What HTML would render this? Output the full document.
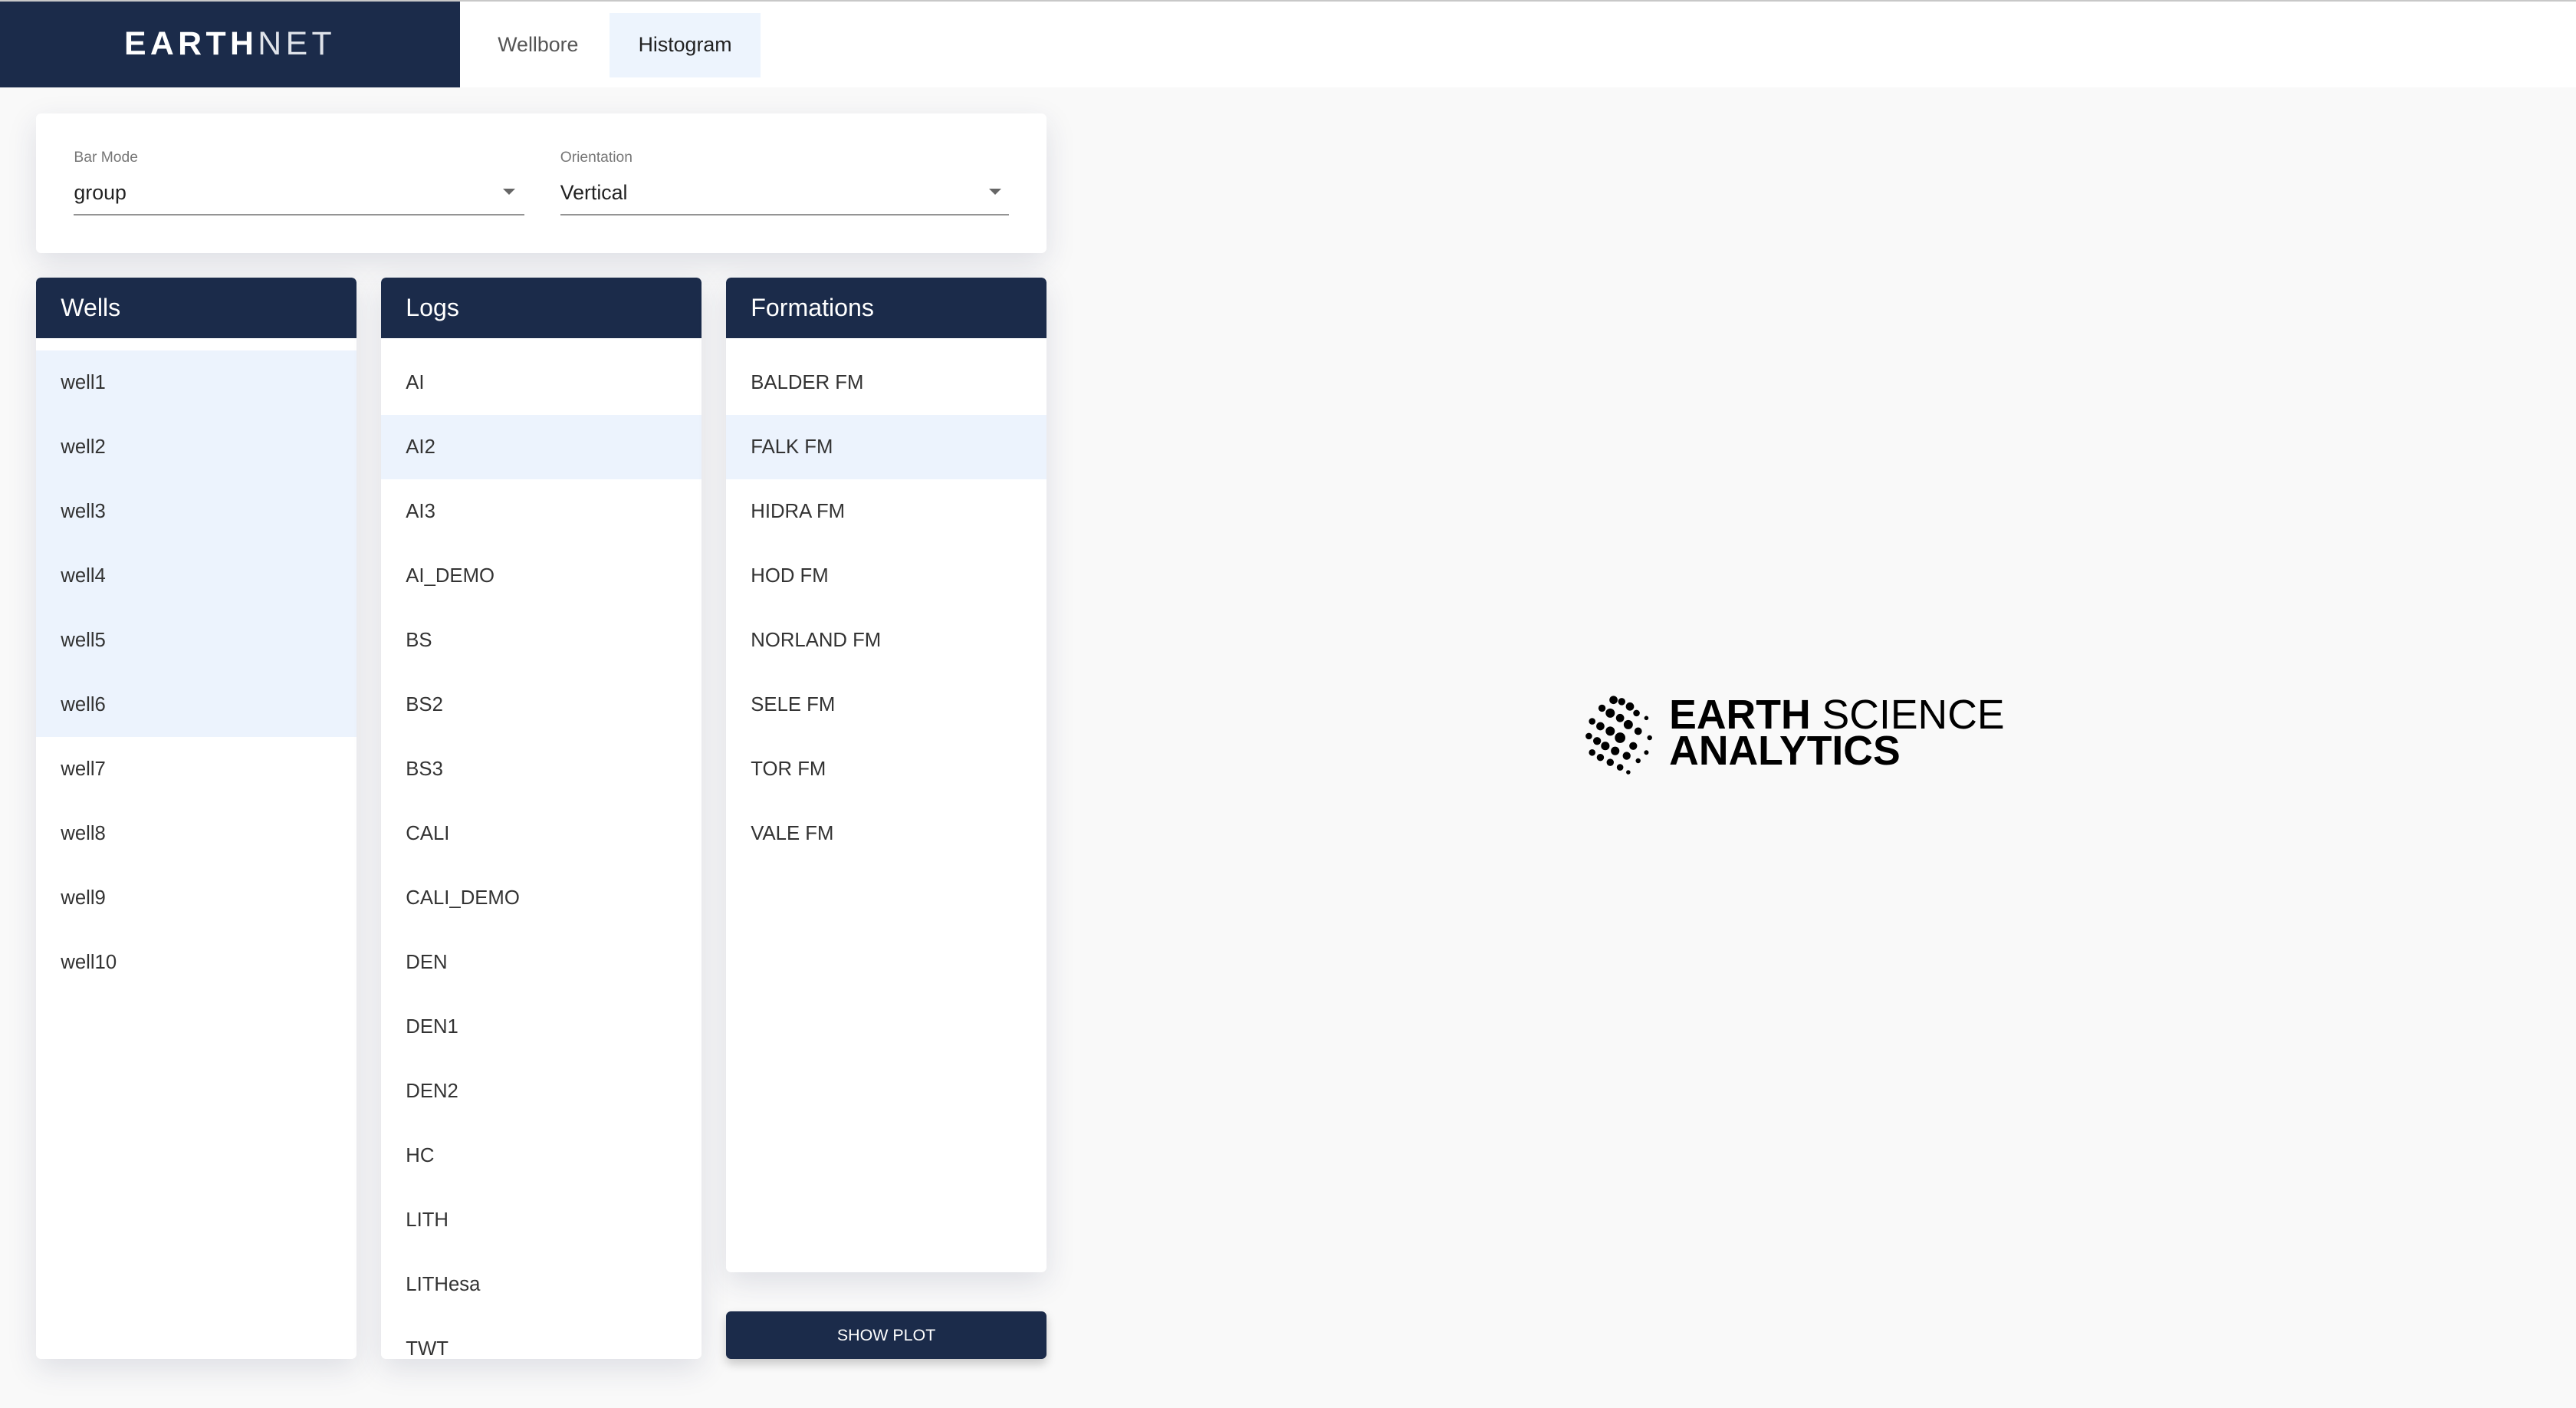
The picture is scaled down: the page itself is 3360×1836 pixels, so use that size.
<!DOCTYPE html>
<html><head><meta charset="utf-8"><style>
*{margin:0;padding:0;box-sizing:border-box}
html,body{width:3360px;height:1836px;overflow:hidden;background:#f9f9f9}
#r{zoom:2.142857;width:1568px;height:857px;position:relative;font-family:"Liberation Sans",sans-serif;background:#f9f9f9}
.hdr{position:absolute;left:0;top:0;width:1568px;height:53px;background:#fff;border-top:1px solid #c8c8c8}
.logo{position:absolute;left:0;top:1px;width:280px;height:52px;background:#1b2b4a;color:#fff;font-size:20px;letter-spacing:2.5px;text-align:center;line-height:52px}
.logo b{font-weight:700}.logo span{font-weight:400;color:#dfe3ea}
.tab{position:absolute;top:8px;height:39px;line-height:39px;font-size:12.5px;color:#555}
.card{position:absolute;background:#fff;border-radius:3px;box-shadow:0 6px 18px rgba(40,50,90,.13)}
.lab{position:absolute;font-size:9px;color:#777}
.val{position:absolute;font-size:12.5px;color:#222}
.ul{position:absolute;height:1px;background:#949494}
.arr{position:absolute;width:0;height:0;border-left:4px solid transparent;border-right:4px solid transparent;border-top:4px solid #666}
.ph{position:absolute;left:0;top:0;right:0;height:37px;background:#1b2b4a;color:#fff;font-size:15px;line-height:37px;padding-left:15px;border-radius:3px 3px 0 0}
.it{position:absolute;left:0;right:0;height:39.2px;line-height:39.2px;padding-left:15px;font-size:12px;color:#333}
.sel{background:#ecf3fd}
.btn{position:absolute;left:442px;top:798px;width:195px;height:29px;background:#1b2b4a;color:#fff;font-size:10px;text-align:center;line-height:29px;border-radius:3px;box-shadow:0 3px 6px rgba(0,0,0,.2)}
.esa{position:absolute;left:1016px;top:424px;font-size:25px;color:#000;line-height:22px}
</style></head><body><div id="r">
<div class="hdr"></div>
<div class="logo"><b>EARTH</b><span>NET</span></div>
<div class="tab" style="left:303px">Wellbore</div>
<div class="tab" style="left:371px;width:92px;background:#edf4fd;color:#222;text-align:center">Histogram</div>

<div class="card" style="left:22px;top:69px;width:615px;height:85px">
<div class="lab" style="left:23px;top:22px">Bar Mode</div>
<div class="val" style="left:23px;top:41px">group</div>
<div class="arr" style="left:284px;top:46px"></div>
<div class="ul" style="left:23px;top:61px;width:274px"></div>
<div class="lab" style="left:319px;top:22px">Orientation</div>
<div class="val" style="left:319px;top:41px">Vertical</div>
<div class="arr" style="left:580px;top:46px"></div>
<div class="ul" style="left:319px;top:61px;width:273px"></div>
</div>

<div class="card" style="left:22px;top:169px;width:195px;height:658px;overflow:hidden">
<div class="ph">Wells</div>
<div class="it sel" style="top:44.5px">well1</div>
<div class="it sel" style="top:83.7px">well2</div>
<div class="it sel" style="top:122.9px">well3</div>
<div class="it sel" style="top:162.1px">well4</div>
<div class="it sel" style="top:201.3px">well5</div>
<div class="it sel" style="top:240.5px">well6</div>
<div class="it" style="top:279.7px">well7</div>
<div class="it" style="top:318.9px">well8</div>
<div class="it" style="top:358.1px">well9</div>
<div class="it" style="top:397.3px">well10</div>
</div>

<div class="card" style="left:232px;top:169px;width:195px;height:658px;overflow:hidden">
<div class="ph">Logs</div>
<div class="it" style="top:44.5px">AI</div>
<div class="it sel" style="top:83.7px">AI2</div>
<div class="it" style="top:122.9px">AI3</div>
<div class="it" style="top:162.1px">AI_DEMO</div>
<div class="it" style="top:201.3px">BS</div>
<div class="it" style="top:240.5px">BS2</div>
<div class="it" style="top:279.7px">BS3</div>
<div class="it" style="top:318.9px">CALI</div>
<div class="it" style="top:358.1px">CALI_DEMO</div>
<div class="it" style="top:397.3px">DEN</div>
<div class="it" style="top:436.5px">DEN1</div>
<div class="it" style="top:475.7px">DEN2</div>
<div class="it" style="top:514.9px">HC</div>
<div class="it" style="top:554.1px">LITH</div>
<div class="it" style="top:593.3px">LITHesa</div>
<div class="it" style="top:632.5px">TWT</div>
</div>

<div class="card" style="left:442px;top:169px;width:195px;height:605px;overflow:hidden">
<div class="ph">Formations</div>
<div class="it" style="top:44.5px">BALDER FM</div>
<div class="it sel" style="top:83.7px">FALK FM</div>
<div class="it" style="top:122.9px">HIDRA FM</div>
<div class="it" style="top:162.1px">HOD FM</div>
<div class="it" style="top:201.3px">NORLAND FM</div>
<div class="it" style="top:240.5px">SELE FM</div>
<div class="it" style="top:279.7px">TOR FM</div>
<div class="it" style="top:318.9px">VALE FM</div>
</div>
<div class="btn">SHOW PLOT</div>

<svg style="position:absolute;left:964px;top:421px" width="50" height="52" viewBox="0 0 50 52" fill="#000">
<circle cx="18" cy="5" r="2.5"/><circle cx="23" cy="6" r="2.2"/><circle cx="28" cy="9" r="2.5"/><circle cx="32" cy="13" r="2"/><circle cx="38" cy="16" r="1.3"/>
<circle cx="11" cy="10" r="2.2"/><circle cx="16" cy="13" r="2.8"/><circle cx="22" cy="16" r="2.5"/><circle cx="27" cy="20" r="2.8"/><circle cx="33" cy="24" r="2.3"/><circle cx="40" cy="28" r="1.5"/>
<circle cx="5" cy="18" r="2"/><circle cx="10" cy="21" r="2.5"/><circle cx="16" cy="24" r="2.8"/><circle cx="22" cy="28" r="3.2"/><circle cx="30" cy="33" r="2.4"/><circle cx="38" cy="37" r="1.4"/>
<circle cx="3" cy="27" r="2"/><circle cx="8" cy="30" r="2.4"/><circle cx="13" cy="33" r="2.6"/><circle cx="19" cy="36" r="2.6"/><circle cx="26" cy="39" r="2.4"/><circle cx="33" cy="42" r="1.5"/>
<circle cx="5" cy="37" r="2"/><circle cx="10" cy="40" r="2.2"/><circle cx="16" cy="43" r="2.2"/><circle cx="22" cy="46" r="2"/><circle cx="27" cy="49" r="1.3"/>
</svg>
<div class="esa"><b>EARTH</b> <span style="font-weight:400">SCIENCE</span><br><b>ANALYTICS</b></div>
</div></body></html>
